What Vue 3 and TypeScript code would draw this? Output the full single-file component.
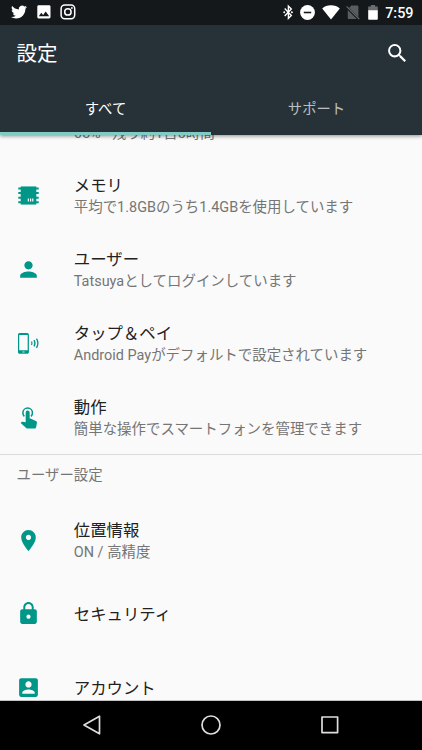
<script setup lang="ts">
interface Item {
  icon: string
  title?: string
  summary?: string
}

const deviceItems: Item[] = [
  { icon: 'none', summary: '65% - 残り約1日5時間' },
  { icon: 'memory', title: 'メモリ', summary: '平均で1.8GBのうち1.4GBを使用しています' },
  { icon: 'person', title: 'ユーザー', summary: 'Tatsuyaとしてログインしています' },
  { icon: 'pay', title: 'タップ＆ペイ', summary: 'Android Payがデフォルトで設定されています' },
  { icon: 'touch', title: '動作', summary: '簡単な操作でスマートフォンを管理できます' },
]

const userItems: Item[] = [
  { icon: 'place', title: '位置情報', summary: 'ON / 高精度' },
  { icon: 'lock', title: 'セキュリティ' },
  { icon: 'account', title: 'アカウント' },
]

const sections = [
  { heading: '', items: deviceItems },
  { heading: 'ユーザー設定', items: userItems },
]

const paths: Record<string, string> = {
  person: 'M12 12c2.21 0 4-1.79 4-4s-1.79-4-4-4-4 1.79-4 4 1.79 4 4 4zm0 2c-2.67 0-8 1.34-8 4v2h16v-2c0-2.66-5.33-4-8-4z',
  place: 'M12 2C8.13 2 5 5.13 5 9c0 5.25 7 13 7 13s7-7.75 7-13c0-3.87-3.13-7-7-7zm0 9.5c-1.38 0-2.5-1.12-2.5-2.5s1.12-2.5 2.5-2.5 2.5 1.12 2.5 2.5-1.12 2.5-2.5 2.5z',
  lock: 'M18 8h-1V6c0-2.76-2.24-5-5-5S7 3.24 7 6v2H6c-1.1 0-2 .9-2 2v10c0 1.1.9 2 2 2h12c1.1 0 2-.9 2-2V10c0-1.1-.9-2-2-2zm-6 9c-1.1 0-2-.9-2-2s.9-2 2-2 2 .9 2 2-.9 2-2 2zm3.1-9H8.9V6c0-1.71 1.39-3.1 3.1-3.1 1.71 0 3.1 1.39 3.1 3.1v2z',
  account: 'M3 5v14c0 1.1.89 2 2 2h14c1.1 0 2-.9 2-2V5c0-1.1-.9-2-2-2H5c-1.11 0-2 .9-2 2zm12 4c0 1.66-1.34 3-3 3s-3-1.34-3-3 1.34-3 3-3 3 1.34 3 3zm-9 8c0-2 4-3.1 6-3.1s6 1.1 6 3.1v1H6v-1z',
}
</script>

<template>
  <div class="phone">
    <header class="top">
      <div class="status">
        <div class="notifications">
          <svg width="16" height="16" viewBox="0 0 24 24" fill="#fff"><path d="M23.953 4.57a10 10 0 01-2.825.775 4.958 4.958 0 002.163-2.723c-.951.555-2.005.959-3.127 1.184a4.92 4.92 0 00-8.384 4.482C7.69 8.095 4.067 6.13 1.64 3.162a4.822 4.822 0 00-.666 2.475c0 1.71.87 3.213 2.188 4.096a4.904 4.904 0 01-2.228-.616v.06a4.923 4.923 0 003.946 4.827 4.996 4.996 0 01-2.212.085 4.936 4.936 0 004.604 3.417 9.867 9.867 0 01-6.102 2.105c-.39 0-.779-.023-1.17-.067a13.995 13.995 0 007.557 2.209c9.053 0 13.998-7.496 13.998-13.985 0-.21 0-.42-.015-.63A9.935 9.935 0 0024 4.59z" /></svg>
          <svg width="14" height="14" viewBox="0 0 14 14"><rect x=".3" y=".3" width="13.2" height="13.2" rx="1.4" fill="#fff" /><path d="M1.8 11.2L4.3 7.7l1.8 2.2 2.6-3.4 3.5 4.7z" fill="#14181b" /></svg>
          <svg width="16" height="16" viewBox="0 0 16 16" fill="none" stroke="#fff"><rect x="1.1" y="1.1" width="13.6" height="13.6" rx="3.6" stroke-width="1.5" /><circle cx="7.9" cy="7.9" r="3.2" stroke-width="1.5" /><circle cx="11.9" cy="4" r=".9" fill="#fff" stroke="none" /></svg>
        </div>
        <div class="indicators">
          <svg width="11" height="16" viewBox="0 0 11 16"><path d="M1.7 4.6l6.6 6.9-2.9 2.9V2.1l2.9 2.9-6.6 6.9" fill="none" stroke="#fff" stroke-width="1.4" /><path d="M1.2 7.1l1.2 1.2-1.2 1.2L0 8.3zM8.9 7.1l1.2 1.2-1.2 1.2-1.2-1.2z" fill="#fff" /></svg>
          <svg class="dnd" width="15" height="15" viewBox="0 0 15 15"><circle cx="7.5" cy="7.5" r="7.4" fill="#fff" /><path d="M3.8 7.5h7.4" stroke="#14181b" stroke-width="1.6" /></svg>
          <svg class="wifi" width="18" height="15" viewBox="0 0 18 15"><path d="M9 14.6L.2 3.4C2.5 1.4 5.4.3 9 .3s6.5 1.1 8.8 3.1z" fill="#fff" /></svg>
          <svg class="sim" width="14" height="15" viewBox="0 0 14 15"><path d="M5.3.6h5.9c.8 0 1.2.5 1.2 1.2v12.3H2.8c-.6 0-1-.4-1-1V4.2z" fill="#5a5d5f" /><path d="M.2 1.6l12.7 12.7" stroke="#14181b" stroke-width="2.6" /><path d="M.6 1.4l12.7 12.7" stroke="#6c6f70" stroke-width="1.2" /></svg>
          <svg class="battery" width="10" height="15" viewBox="0 0 10 15"><path d="M.2 1.6h2.7V.1h4.2v1.5h2.7V6H.2z" fill="#6a6d6f" /><path d="M.2 5.3h9.6V14c0 .5-.3.8-.8.8H1c-.5 0-.8-.3-.8-.8z" fill="#fff" /></svg>
          <span class="clock">7:59</span>
        </div>
      </div>
      <div class="appbar">
        <h1>設定</h1>
        <svg width="24.6" height="24.6" viewBox="0 0 24 24" fill="#fff"><path d="M15.5 14h-.79l-.28-.27A6.471 6.471 0 0 0 16 9.5 6.5 6.5 0 1 0 9.5 16c1.61 0 3.09-.59 4.23-1.57l.27.28v.79l5 4.99L20.49 19l-4.99-5zm-6 0C7.01 14 5 11.99 5 9.5S7.01 5 9.5 5 14 7.01 14 9.5 11.99 14 9.5 14z" /></svg>
      </div>
      <nav class="tabs">
        <div class="tab active">すべて</div>
        <div class="tab">サポート</div>
      </nav>
    </header>

    <main class="list">
      <section v-for="(section, i) in sections" :key="i" class="section">
        <h2 v-if="section.heading">{{ section.heading }}</h2>
        <div v-for="item in section.items" :key="item.icon" class="row" :class="{ partial: !item.title }">
          <svg class="icon" viewBox="0 0 24 24" fill="#009688">
            <path v-if="paths[item.icon]" :d="paths[item.icon]" />
            <g v-else-if="item.icon === 'memory'">
              <path d="M4.5 3.3h15v17.4h-15z" />
              <path d="M2.2 4.3h19.6v1.9H2.2zM2.2 8.7h19.6v1.9H2.2zM2.2 13.1h19.6V15H2.2zM2.2 17.5h19.6v1.9H2.2z" />
              <path d="M11.3 14.8h1.2v3h-1.2zM13.4 14.8h1.2v3h-1.2zM15.5 14.8h1.2v3h-1.2z" fill="#fafafa" />
            </g>
            <g v-else-if="item.icon === 'pay'" transform="translate(.3 .7)">
              <path fill-rule="evenodd" d="M3.3 2.2h7.1c1 0 1.7.7 1.7 1.7v16.4c0 1-.7 1.7-1.7 1.7H3.3c-1 0-1.7-.7-1.7-1.7V3.9c0-1 .7-1.7 1.7-1.7zM2.8 4v14.8h8.1V4z" />
              <path d="M5.9 20h2v.8h-2z" fill="#fafafa" />
              <path d="M14.6 10.3q1 1.7 0 3.4M17 9q1.8 3 0 6M19.4 7.6q2.6 4.4 0 8.8" fill="none" stroke="#009688" stroke-width="1.25" />
            </g>
            <g v-else-if="item.icon === 'touch'" transform="translate(-.4 .7)">
              <path d="M8.4 11.2C7.5 10.3 7 9.1 7 7.8a4.6 4.6 0 0 1 9.2 0c0 1.3-.5 2.5-1.4 3.4" fill="none" stroke="#009688" stroke-width="1.5" />
              <path d="M9.7 7.4a1.9 1.9 0 0 1 3.8 0v5.8h.6c.3 0 .5.1.7.2l4.7 2.3c.7.3 1.1 1 1 1.7l-.8 4.2c-.1.8-.8 1.3-1.5 1.3h-6.8c-.5 0-.9-.2-1.2-.5l-5.300-4.900.9-.9c.3-.3.7-.4 1.100-.3l2.800.6z" />
            </g>
          </svg>
          <div class="text">
            <div v-if="item.title" class="title">{{ item.title }}</div>
            <div v-if="item.summary" class="summary">{{ item.summary }}</div>
          </div>
        </div>
      </section>
    </main>

    <footer class="navbar">
      <svg width="22" height="22" viewBox="0 0 22 22"><path d="M18.5 2.2v17.6L3 11z" /></svg>
      <svg width="22" height="22" viewBox="0 0 22 22"><circle cx="11" cy="11" r="9" /></svg>
      <svg width="22" height="22" viewBox="0 0 22 22"><rect x="3" y="3" width="15.6" height="15.6" /></svg>
    </footer>
  </div>
</template>

<style>
body {
  background: #fafafa;
}
</style>

<style scoped>
.phone {
  height: 750px;
  display: flex;
  flex-direction: column;
  overflow: hidden;
  font-family: Roboto, "Noto Sans CJK JP", sans-serif;
  background: #fafafa;
}
.phone * {
  box-sizing: border-box;
}
svg {
  display: block;
  flex: none;
}
.top {
  position: relative;
  z-index: 1;
  flex: none;
  height: 134.5px;
  background: #263238;
  box-shadow: 0 1px 4px rgba(0, 0, 0, 0.45);
}
.status {
  height: 24.5px;
  padding: 0 8.5px 0 11px;
  display: flex;
  align-items: center;
  justify-content: space-between;
  background: #14181b;
}
.notifications,
.indicators {
  display: flex;
  align-items: center;
}
.notifications {
  gap: 9.5px;
}
.dnd {
  margin-left: 6.5px;
}
.wifi {
  margin-left: 6.5px;
}
.sim {
  margin-left: 6.5px;
}
.battery {
  margin-left: 8px;
}
.clock {
  margin-left: 7px;
  padding-top: 3px;
  color: #fff;
  font-size: 14.4px;
  font-weight: 500;
  line-height: 20px;
}
.appbar {
  height: 57.5px;
  padding: 0 12.5px 0 16.5px;
  display: flex;
  align-items: center;
  justify-content: space-between;
}
h1 {
  margin: 0;
  padding-top: 2px;
  color: #fff;
  font-size: 20.5px;
  font-weight: 400;
  line-height: 28px;
}
.tabs {
  height: 52.5px;
  display: grid;
  grid-template-columns: 1fr 1fr;
}
.tab {
  padding-top: 2px;
  display: flex;
  align-items: center;
  justify-content: center;
  border-bottom: 3px solid transparent;
  color: rgba(255, 255, 255, 0.7);
  font-size: 14.36px;
}
.tab.active {
  color: #fff;
  border-color: #80cbc4;
}
.list {
  flex: 1;
  min-height: 0;
  overflow: hidden;
  border-bottom: 1px solid #c4c4c4;
}
.section:first-child {
  margin-top: -11.4px;
}
.section + .section {
  border-top: 1px solid #dadada;
}
h2 {
  margin: 0;
  height: 48.5px;
  padding: 0 16.5px 12px;
  display: flex;
  align-items: center;
  color: #757575;
  font-size: 14.4px;
  font-weight: 400;
}
.row {
  height: 73.85px;
  padding-left: 16px;
  display: flex;
  align-items: center;
}
.row.partial {
  height: 35.95px;
  align-items: flex-start;
}
.icon {
  width: 25px;
  height: 25px;
  margin-bottom: 1.4px;
}
.text {
  margin-left: 32.8px;
  white-space: nowrap;
}
.title {
  color: #212121;
  font-size: 16.4px;
  line-height: 22px;
}
.summary {
  padding-top: 1px;
  margin-bottom: -1px;
  color: #757575;
  font-size: 14.45px;
  line-height: 20px;
}
.navbar {
  flex: none;
  height: 49.2px;
  display: flex;
  align-items: center;
  justify-content: center;
  gap: 97px;
  background: #000;
}
.navbar path,
.navbar circle,
.navbar rect {
  fill: none;
  stroke: #dedede;
  stroke-width: 1.7px;
  stroke-linejoin: round;
}
</style>
